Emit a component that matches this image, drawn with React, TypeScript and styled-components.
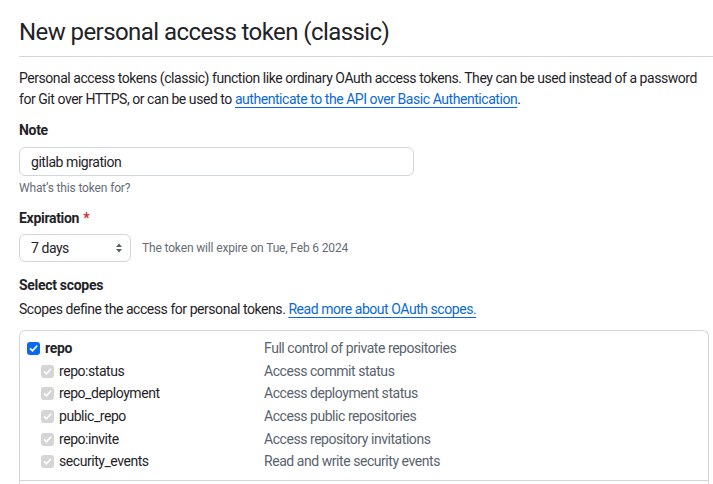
import React from "react";
import styled, { createGlobalStyle } from "styled-components";

const GlobalStyle = createGlobalStyle`
  html, body {
    margin: 0;
    padding: 0;
    background: #ffffff;
    overflow: hidden;
  }
  body {
    font-family: Roboto, "Liberation Sans", Arial, sans-serif;
    color: #1f2328;
    font-size: 14px;
    line-height: 1.5;
    letter-spacing: -0.45px;
  }
`;

const Page = styled.main`
  padding: 14px 0 0 19px;
  width: 694px;
`;

const Header = styled.div`
  border-bottom: 1px solid #d0d7de;
  padding-bottom: 6px;
  margin-right: -10px;
`;

const Title = styled.h2`
  margin: 0;
  font-size: 24px;
  font-weight: 400;
  line-height: 36px;
  letter-spacing: -0.57px;
  color: #1f2328;
`;

const Intro = styled.p`
  margin: 11px 0 0;
  font-size: 14px;
  line-height: 21px;
  width: 690px;
`;

const Link = styled.a`
  color: #0969da;
  text-decoration: underline;
  text-underline-offset: 3px;
  text-decoration-thickness: 1px;
`;

const FormGroup = styled.div<{ $top: number }>`
  margin-top: ${(p) => p.$top}px;
  display: flex;
  flex-direction: column;
`;

const Label = styled.label`
  font-size: 14px;
  font-weight: 700;
  line-height: 21px;
  letter-spacing: -0.3px;
`;

const Required = styled.span`
  color: #d1242f;
  margin-left: 4px;
`;

const TextInput = styled.input`
  margin-top: 6px;
  box-sizing: border-box;
  width: 395px;
  height: 29px;
  padding: 0 11px;
  border: 1px solid #d0d7de;
  border-radius: 6px;
  font-family: inherit;
  font-size: 14px;
  letter-spacing: -0.45px;
  color: #1f2328;
  background: #ffffff;
  outline: none;
`;

const Note = styled.p`
  margin: 3px 0 0;
  font-size: 12px;
  line-height: 18px;
  letter-spacing: -0.15px;
  color: #656d76;
`;

const SelectRow = styled.div`
  margin-top: 5px;
  display: flex;
  align-items: center;
  gap: 11px;
`;

const SelectBox = styled.div`
  box-sizing: border-box;
  width: 112px;
  height: 28px;
  padding: 0 7px 0 11px;
  border: 1px solid #d0d7de;
  border-radius: 6px;
  display: flex;
  align-items: center;
  justify-content: space-between;
  font-size: 14px;
  background: #ffffff;
`;

const SmallNote = styled.span`
  font-size: 12px;
  letter-spacing: -0.15px;
  color: #656d76;
`;

const Description = styled.p`
  margin: 3px 0 0;
  font-size: 14px;
  line-height: 21px;
`;

const ScopeBox = styled.div`
  margin-top: 10px;
  margin-right: 4px;
  border: 1px solid #d0d7de;
  border-bottom: none;
  border-radius: 6px 6px 0 0;
  padding: 6px 0 0;
`;

const ScopeList = styled.div`
  padding: 0 7px 7px;
`;

const ScopeRow = styled.div`
  display: grid;
  grid-template-columns: 237px 1fr;
  align-items: center;
  height: 22.7px;
`;

const ScopeName = styled.div<{ $child?: boolean }>`
  display: flex;
  align-items: center;
  gap: 5px;
  padding-left: ${(p) => (p.$child ? 14 : 0)}px;
  font-weight: ${(p) => (p.$child ? 400 : 700)};
  letter-spacing: ${(p) => (p.$child ? "-0.45px" : "-0.3px")};
  color: #1f2328;
`;

const ScopeDesc = styled.div`
  color: #59636e;
`;

const Check = styled.span<{ $disabled?: boolean }>`
  width: 13px;
  height: 13px;
  box-sizing: border-box;
  border-radius: 3px;
  background: ${(p) => (p.$disabled ? "#d5d5d5" : "#0b68f0")};
  display: inline-flex;
  align-items: center;
  justify-content: center;
  flex-shrink: 0;
`;

const NextGroup = styled.div`
  border-top: 1px solid #d0d7de;
  height: 10px;
`;

const CheckMark = () => (
  <svg width="9" height="9" viewBox="0 0 9 9" fill="none">
    <path d="M1.5 4.8 L3.6 6.8 L7.6 2.2" stroke="#ffffff" strokeWidth="1.7" strokeLinecap="round" strokeLinejoin="round" />
  </svg>
);

const SelectArrows = () => (
  <svg width="8" height="12" viewBox="0 0 8 12">
    <path d="M4 1.5 L7 5 L1 5 Z" fill="#57606a" />
    <path d="M4 10.5 L7 7 L1 7 Z" fill="#57606a" />
  </svg>
);

const scopes = [
  { name: "repo:status", desc: "Access commit status" },
  { name: "repo_deployment", desc: "Access deployment status" },
  { name: "public_repo", desc: "Access public repositories" },
  { name: "repo:invite", desc: "Access repository invitations" },
  { name: "security_events", desc: "Read and write security events" },
];

export default function App() {
  return (
    <>
      <GlobalStyle />
      <Page>
        <Header>
          <Title>New personal access token (classic)</Title>
        </Header>
        <Intro>
          Personal access tokens (classic) function like ordinary OAuth access tokens. They can be used instead of a password
          for Git over HTTPS, or can be used to{" "}
          <Link href="#">authenticate to the API over Basic Authentication</Link>.
        </Intro>

        <FormGroup $top={10}>
          <Label>Note</Label>
          <TextInput defaultValue="gitlab migration" />
          <Note>What’s this token for?</Note>
        </FormGroup>

        <FormGroup $top={11}>
          <Label>
            Expiration<Required>*</Required>
          </Label>
          <SelectRow>
            <SelectBox>
              <span>7 days</span>
              <SelectArrows />
            </SelectBox>
            <SmallNote>The token will expire on Tue, Feb 6 2024</SmallNote>
          </SelectRow>
        </FormGroup>

        <FormGroup $top={13}>
          <Label>Select scopes</Label>
          <Description>
            Scopes define the access for personal tokens.{" "}
            <Link href="#">Read more about OAuth scopes.</Link>
          </Description>
        </FormGroup>

        <ScopeBox>
          <ScopeList>
            <ScopeRow>
              <ScopeName>
                <Check>
                  <CheckMark />
                </Check>
                repo
              </ScopeName>
              <ScopeDesc>Full control of private repositories</ScopeDesc>
            </ScopeRow>
            {scopes.map((s) => (
              <ScopeRow key={s.name}>
                <ScopeName $child>
                  <Check $disabled>
                    <CheckMark />
                  </Check>
                  {s.name}
                </ScopeName>
                <ScopeDesc>{s.desc}</ScopeDesc>
              </ScopeRow>
            ))}
          </ScopeList>
          <NextGroup />
        </ScopeBox>
      </Page>
    </>
  );
}
